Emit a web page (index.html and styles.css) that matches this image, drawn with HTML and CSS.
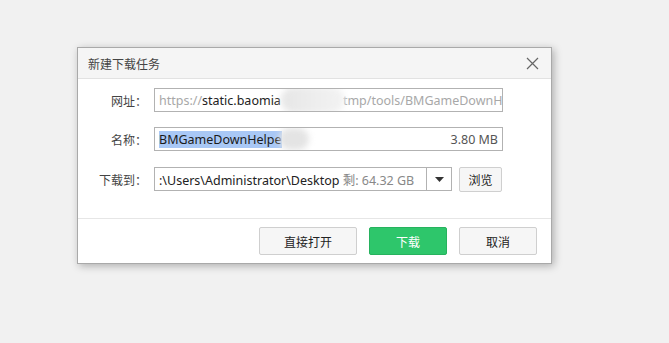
FILE: index.html
```html
<!DOCTYPE html>
<html lang="zh-CN">
<head>
<meta charset="utf-8">
<title>新建下载任务</title>
<link rel="stylesheet" href="styles.css">
</head>
<body>
<div class="dialog">
  <div class="titlebar">
    <span class="title">新建下载任务</span>
    <span class="close">
      <svg width="13" height="13" viewBox="0 0 13 13"><path d="M1 1L12 12M12 1L1 12" stroke="#666" stroke-width="1.2" fill="none"/></svg>
    </span>
  </div>
  <div class="body">
    <div class="row">
      <span class="label">网址：</span>
      <div class="field url">
        <span class="muted">https://</span><span class="dark">static.baomia</span><span class="blob blob1"></span><span class="muted">tmp/tools/BMGameDownH</span>
      </div>
    </div>
    <div class="row">
      <span class="label">名称：</span>
      <div class="field name">
        <span class="sel">BMGameDownHelpe</span><span class="blob blob2"></span>
        <span class="size">3.80 MB</span>
      </div>
    </div>
    <div class="row row3">
      <span class="label">下载到：</span>
      <div class="combo">
        <div class="combo-text"><span class="line"><span class="dark">:\Users\Administrator\Desktop</span> <span class="free">剩: 64.32 GB</span></span></div>
        <div class="combo-arrow"><svg width="9" height="5" viewBox="0 0 9 5"><path d="M0 0H9L4.5 5Z" fill="#333"/></svg></div>
      </div>
      <button class="btn small">浏览</button>
    </div>
  </div>
  <div class="footer">
    <button class="btn wide">直接打开</button>
    <button class="btn primary">下载</button>
    <button class="btn">取消</button>
  </div>
</div>
</body>
</html>
```
FILE: styles.css
```css
html, body {
  margin: 0;
  padding: 0;
}
body {
  background: #f1f1f1;
  font-family: "Noto Sans CJK SC", "Noto Sans", sans-serif;
  font-size: 12px;
  color: #333;
  height: 343px;
  overflow: hidden;
}
.dialog {
  margin-left: 77px;
  margin-top: 47px;
  width: 473px;
  border: 1px solid #a9a9a9;
  background: #fff;
  box-shadow: 2px 2px 8px rgba(0,0,0,0.28);
  display: flex;
  flex-direction: column;
}
.titlebar {
  height: 30px;
  background: #f5f5f5;
  border-bottom: 1px solid #e2e2e2;
  display: flex;
  align-items: center;
  justify-content: space-between;
  padding: 0 12px 0 10px;
}
.title {
  color: #444;
}
.close {
  display: flex;
  align-items: center;
}
.body {
  padding: 9px 0 27px 0;
  display: flex;
  flex-direction: column;
  gap: 15px;
  border-bottom: 1px solid #e6e6e6;
}
.row {
  display: flex;
  align-items: center;
  height: 24px;
}
.row3 {
  margin-top: 1px;
}
.label {
  width: 69px;
  text-align: right;
  margin-right: 7px;
  color: #444;
}
.field, .combo-text {
  font-family: "Noto Sans", "Noto Sans CJK SC", sans-serif;
  font-size: 12.5px;
}
.field {
  width: 339px;
  height: 22px;
  border: 1px solid #b2b2b2;
  padding: 0 4px;
  display: flex;
  align-items: center;
  white-space: nowrap;
  overflow: hidden;
}
.muted { color: #a8a8a8; }
.dark { color: #222; }
.blob {
  display: inline-block;
  flex: none;
  filter: blur(3px);
  border-radius: 14px;
}
.blob1 {
  width: 64px;
  height: 26px;
  background: linear-gradient(90deg, #e6e6e6, #ededed 50%, #f3f3f3);
  margin: 0 -2px 0 0;
}
.blob2 {
  width: 30px;
  height: 22px;
  background: #e4e4e4;
  margin-left: -3px;
}
.sel {
  background: #a9c8f5;
  color: #1a1a1a;
  line-height: 17px;
}
.size {
  margin-left: auto;
  color: #555;
}
.combo {
  width: 296px;
  height: 22px;
  border: 1px solid #b2b2b2;
  display: flex;
  align-items: stretch;
}
.combo-text {
  flex: 1;
  padding: 0 4px;
  display: flex;
  align-items: center;
  overflow: hidden;
}
.line {
  white-space: nowrap;
}
.free { color: #888; }
.combo-arrow {
  width: 24px;
  border-left: 1px solid #b2b2b2;
  display: flex;
  align-items: center;
  justify-content: center;
}
.btn {
  font-family: "Noto Sans CJK SC", "Noto Sans", sans-serif;
  font-size: 12px;
  color: #222;
  width: 78px;
  height: 28px;
  border: 1px solid #cfcfcf;
  border-radius: 2px;
  background: #f6f6f6;
  padding: 0;
  display: flex;
  align-items: center;
  justify-content: center;
}
.btn.wide {
  width: 98px;
}
.btn.small {
  width: 43px;
  height: 25px;
  margin-left: 7px;
}
.btn.primary {
  background: #2ec66b;
  border-color: #27b25e;
  color: #fff;
}
.footer {
  height: 44px;
  display: flex;
  justify-content: flex-end;
  align-items: center;
  gap: 12px;
  padding-right: 14px;
  box-sizing: border-box;
}
```
